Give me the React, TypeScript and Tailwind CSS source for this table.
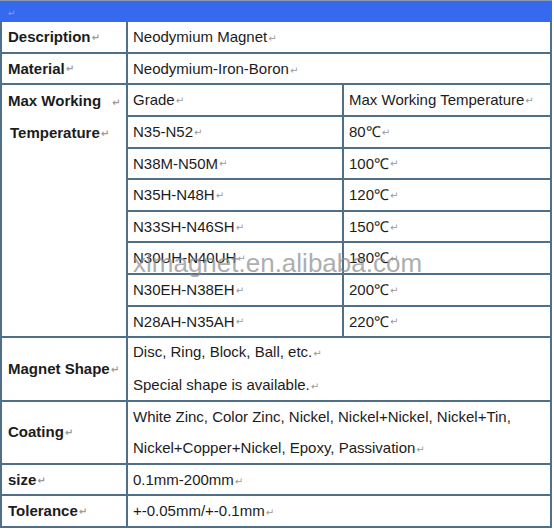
import React from "react";

const Ret = () => (
  <span className="ml-[1px] text-[10px] text-[#9a9a9a]" style={{ fontFamily: '"DejaVu Sans", sans-serif' }}>
    ↵
  </span>
);

const rowH = "h-[31.625px]";

const grades: [string, string][] = [
  ["Grade", "Max Working Temperature"],
  ["N35-N52", "80℃"],
  ["N38M-N50M", "100℃"],
  ["N35H-N48H", "120℃"],
  ["N33SH-N46SH", "150℃"],
  ["N30UH-N40UH", "180℃"],
  ["N30EH-N38EH", "200℃"],
  ["N28AH-N35AH", "220℃"],
];

function Row({ label, children, tall }: { label: string; children: React.ReactNode; tall?: boolean }) {
  return (
    <div className={`flex border-b-2 border-[#50708a] ${tall ? "h-[63.25px]" : rowH}`}>
      <div className="flex w-[126px] shrink-0 items-center border-r-2 border-[#50708a] pl-[6px] pt-[1px] font-bold">
        {label}
        <Ret />
      </div>
      <div className="flex flex-1 flex-col justify-center pl-[5px] pt-[1px]">{children}</div>
    </div>
  );
}

export default function App() {
  return (
    <div
      className="relative w-[554px] bg-white text-[15px] text-[#1c1c1c]"
      style={{ fontFamily: '"Liberation Sans", Arial, sans-serif' }}
    >
      <div className="flex h-[21px] w-[552px] items-end border-t border-[#8a9ab0] bg-[#356aee] pb-[1px] pl-[8px]">
        <span className="text-[9px] text-[#7fa0f4]" style={{ fontFamily: '"DejaVu Sans", sans-serif' }}>↵</span>
      </div>
      <div className="w-[552px] border-x-2 border-t border-[#50708a]">
        <Row label="Description">
          <div>Neodymium Magnet<Ret /></div>
        </Row>
        <Row label="Material">
          <div>Neodymium-Iron-Boron<Ret /></div>
        </Row>

        <div className="flex h-[253px] border-b-2 border-[#50708a]">
          <div className="flex w-[126px] shrink-0 flex-col border-r-2 border-[#50708a] font-bold">
            <div className={`flex items-center pl-[6px] pt-[1px] ${rowH}`}>
              Max Working<span className="ml-[10px]"><Ret /></span>
            </div>
            <div className={`flex items-center pl-[8px] pt-[1px] ${rowH}`}>
              Temperature<Ret />
            </div>
          </div>
          <div className="flex flex-1 flex-col">
            {grades.map(([g, t], i) => (
              <div
                key={g}
                className={`flex flex-1 ${i < grades.length - 1 ? "border-b-2 border-[#50708a]" : ""}`}
              >
                <div className="flex w-[216px] shrink-0 items-center border-r-2 border-[#50708a] pl-[5px] pt-[1px]">
                  {g}
                  <Ret />
                </div>
                <div className="flex items-center pl-[5px] pt-[1px]">
                  {t}
                  <Ret />
                </div>
              </div>
            ))}
          </div>
        </div>

        <Row label="Magnet Shape" tall>
          <div className="leading-[31px]">Disc, Ring, Block, Ball, etc.<Ret /></div>
          <div className="leading-[31px]">Special shape is available.<Ret /></div>
        </Row>
        <Row label="Coating" tall>
          <div className="leading-[31px]">White Zinc, Color Zinc, Nickel, Nickel+Nickel, Nickel+Tin,</div>
          <div className="leading-[31px]">Nickel+Copper+Nickel, Epoxy, Passivation<Ret /></div>
        </Row>
        <Row label="size">
          <div>0.1mm-200mm<Ret /></div>
        </Row>
        <Row label="Tolerance">
          <div>+-0.05mm/+-0.1mm<Ret /></div>
        </Row>
      </div>

      <div className="pointer-events-none absolute left-[133px] top-[244px] text-[26px] text-[#8c8c8c] opacity-70">
        xlmagnet.en.alibaba.com
      </div>
    </div>
  );
}
